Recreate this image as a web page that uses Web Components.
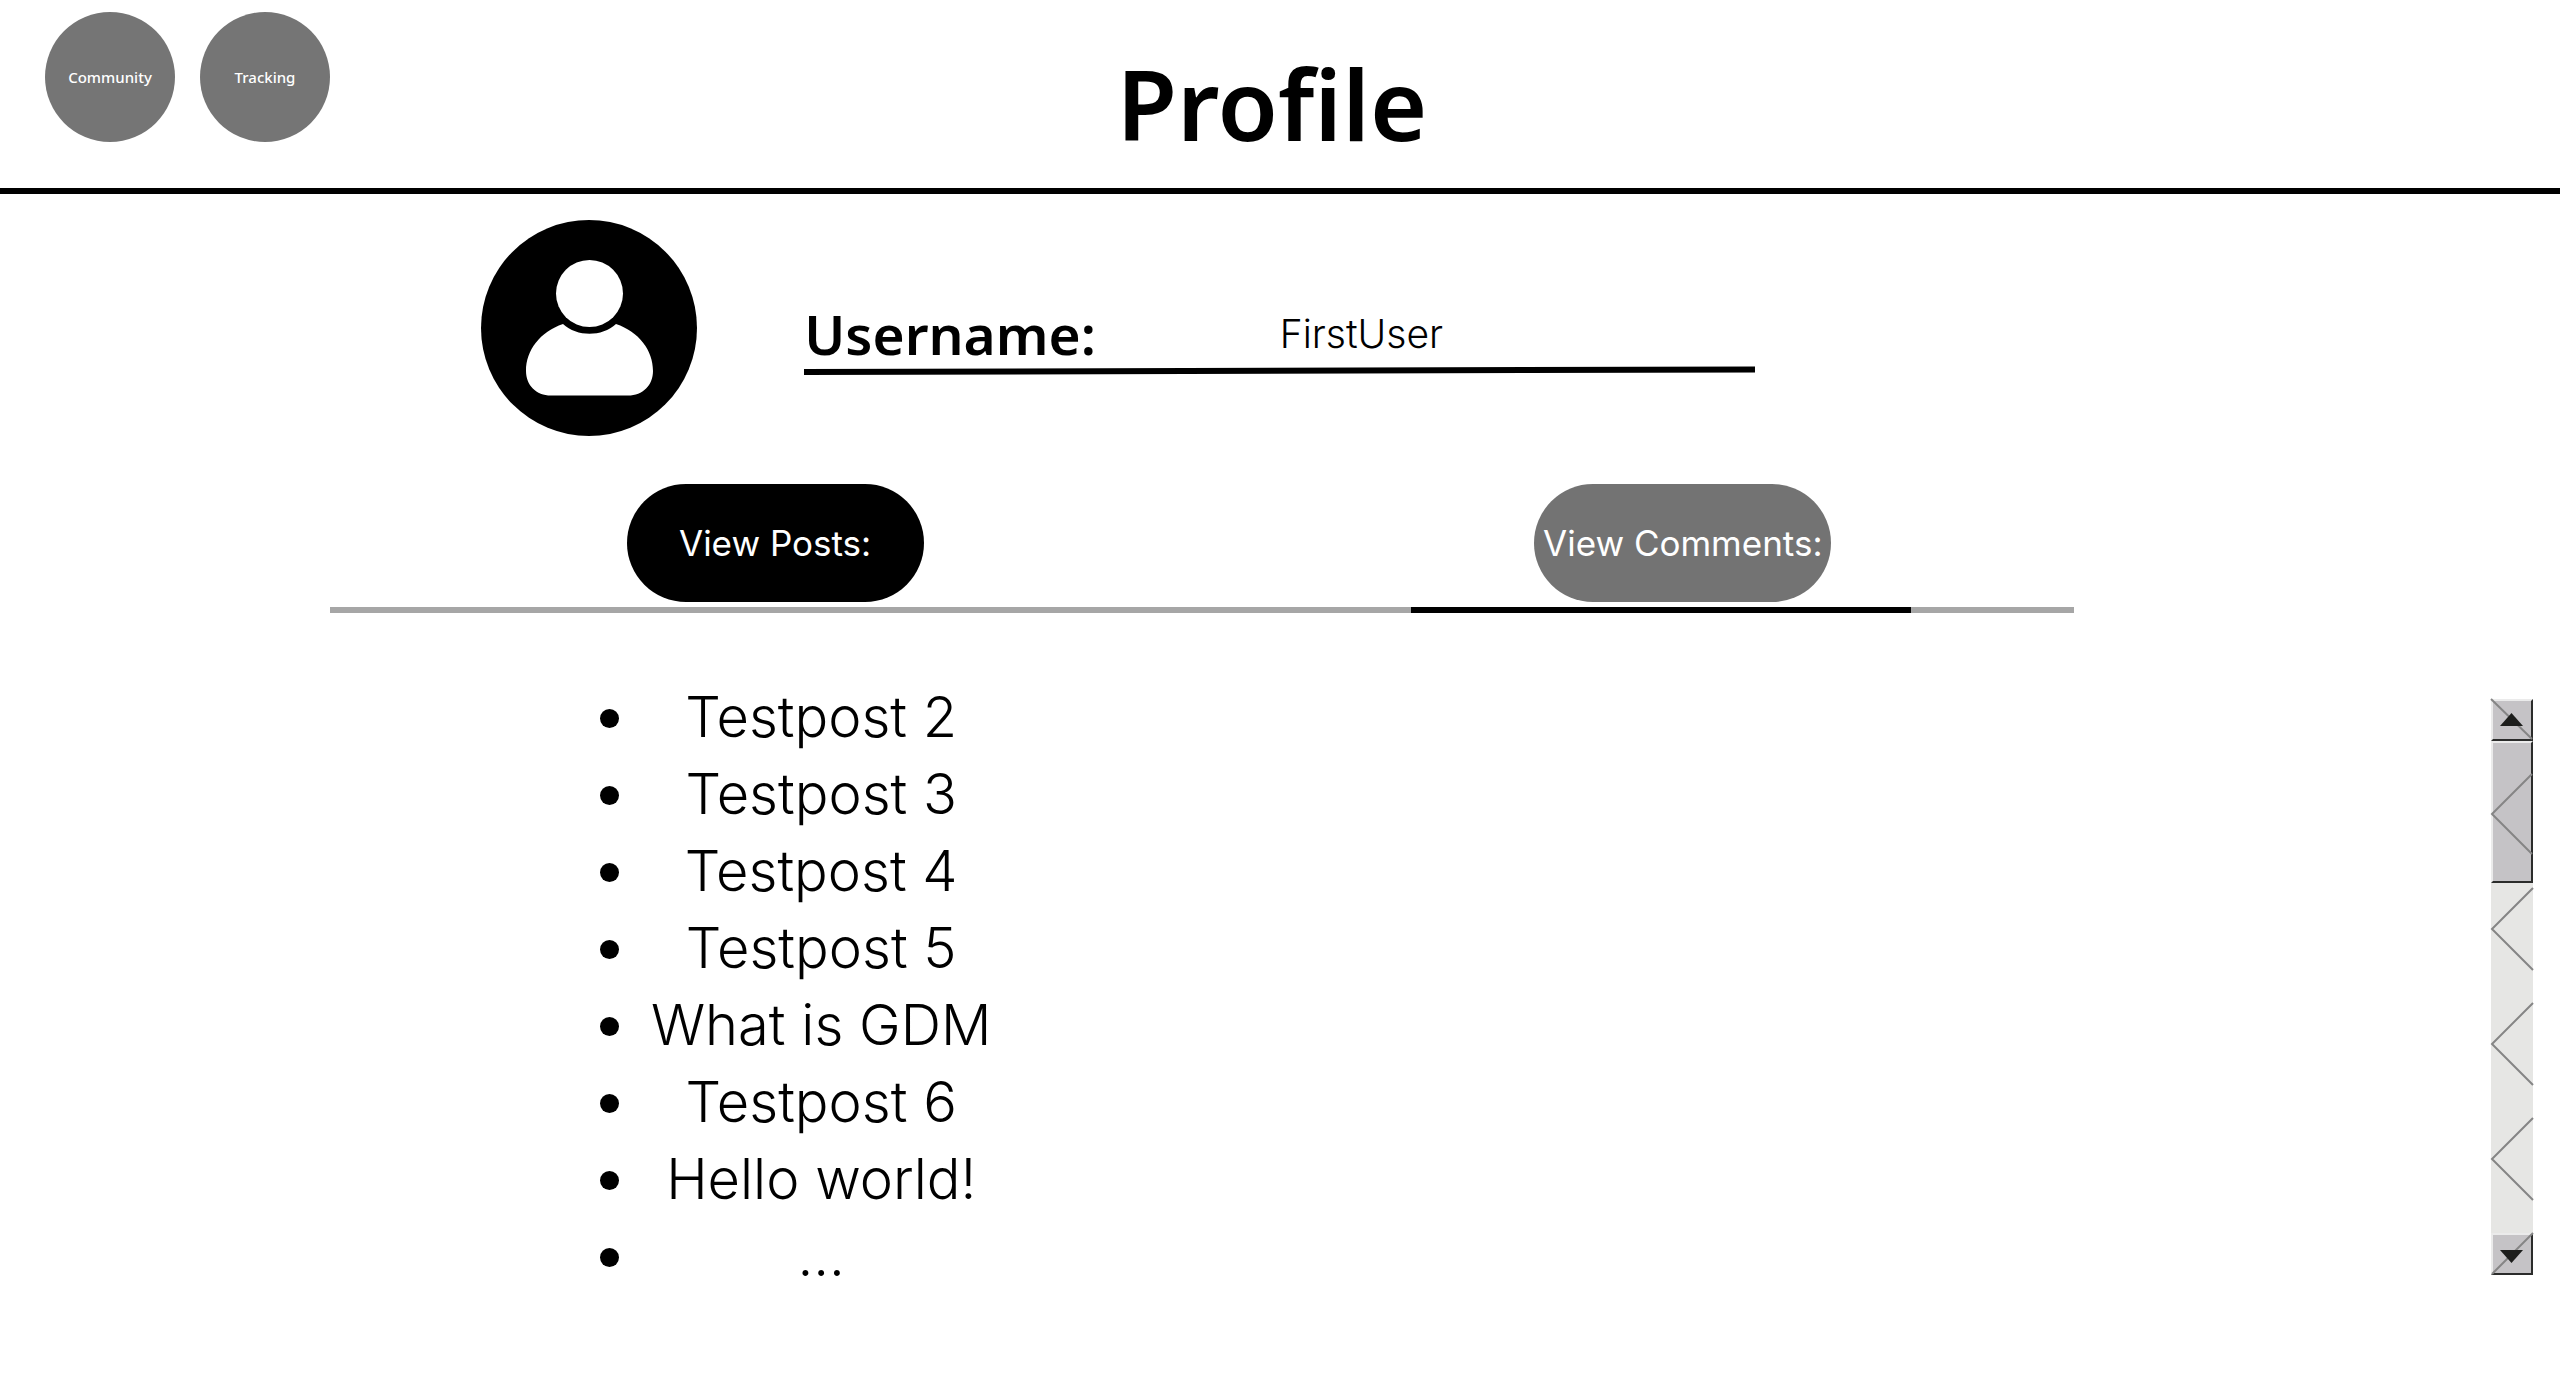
<!DOCTYPE html>
<html lang="en">
<head>
<meta charset="utf-8">
<title>Profile</title>
<style>
  body { margin: 0; background: #fff; color: #000; font-family: Inter, "Noto Sans", sans-serif; }
</style>
</head>
<body>
<profile-page></profile-page>
<script>
const define = (name, html) => customElements.define(name, class extends HTMLElement {
  constructor() {
    super();
    this.attachShadow({ mode: 'open' }).innerHTML = html;
  }
});

define('round-link', `
  <style>
    :host { display: block; }
    a { display: flex; align-items: center; justify-content: center; width: 130px; height: 130px;
        border-radius: 50%; background: #757575; color: #fff; font-family: "Noto Sans", sans-serif; font-size: 15px; font-weight: 500; text-decoration: none; }
  </style>
  <a href="#"><slot></slot></a>`);

define('page-header', `
  <style>
    :host { display: block; border-bottom: 6px solid #000; }
    header { display: grid; grid-template-columns: 1fr auto 1fr; align-items: start; height: 176px; padding: 12px 61px 0 45px; }
    nav { display: flex; gap: 25px; }
    h1 { margin: 0; padding-top: 26px; font-family: "Noto Sans", sans-serif; font-size: 98px; line-height: 130px; font-weight: 600; }
  </style>
  <header>
    <nav><round-link>Community</round-link><round-link>Tracking</round-link></nav>
    <h1><slot></slot></h1>
  </header>`);

define('user-avatar', `
  <style>:host { display: block; width: 216px; height: 216px; } svg { display: block; width: 100%; height: 100%; }</style>
  <svg viewBox="0 0 216 216" role="img" aria-label="User">
    <circle cx="108" cy="108" r="108"/>
    <circle cx="108.500" cy="73.500" r="33.500" fill="#fff"/>
    <path fill="#fff" d="M82 104C59 112 45 130 45 151C45 165 55 175.500 70 175.500H147C162 175.500 172 165 172 151C172 130 158 112 135 104C121 117 96 117 82 104Z"/>
  </svg>`);

define('user-field', `
  <style>
    :host { display: block; }
    .row { display: grid; grid-template-columns: 50% 1fr; align-items: center; height: 60px; }
    label { font-family: "Noto Sans", sans-serif; font-size: 55px; line-height: 60px; font-weight: 600; }
    output { font-size: 39px; line-height: 60px; font-weight: 350; }
    svg { display: block; width: 100%; height: 10px; margin-top: 2px; }
  </style>
  <div class="row"><label for="name">Username:</label><output id="name"><slot></slot></output></div>
  <svg viewBox="0 0 951 10" preserveAspectRatio="none" aria-hidden="true"><path d="M0 6L951 3.500" stroke="#000" stroke-width="6"/></svg>`);

define('pill-button', `
  <style>
    :host { display: block; }
    button { display: block; width: 297px; height: 118px; padding: 0; border: 0; border-radius: 59px;
             background: var(--pill, #000); color: #fff; font-family: inherit; font-size: 35px; font-weight: 400; white-space: nowrap; }
  </style>
  <button type="button"><slot></slot></button>`);

define('view-tabs', `
  <style>
    :host { display: block; }
    .buttons { display: flex; justify-content: space-between; padding: 0 13.9% 0 17%; }
    .muted { --pill: #737373; }
    .track { height: 6px; margin-top: 5px; background: #a6a6a6; }
    .mark { width: 28.7%; height: 6px; margin-left: 62%; background: #000; }
  </style>
  <div class="buttons"><pill-button>View Posts:</pill-button><pill-button class="muted">View Comments:</pill-button></div>
  <div class="track"><div class="mark"></div></div>`);

define('post-list', `
  <style>
    :host { display: block; }
    ul { display: grid; grid-template-columns: 19px auto; column-gap: 32px; margin: 0; padding: 0; list-style: none;
         font-size: 56px; line-height: 77px; font-weight: 350; text-align: center; }
    li { display: grid; grid-column: 1 / -1; grid-template-columns: subgrid; align-items: center; }
    li::before { content: ""; width: 19px; height: 19px; margin-top: 2px; border-radius: 50%; background: #000; }
  </style>
  <ul>
    <li><span>Testpost 2</span></li>
    <li><span>Testpost 3</span></li>
    <li><span>Testpost 4</span></li>
    <li><span>Testpost 5</span></li>
    <li><span>What is GDM</span></li>
    <li><span>Testpost 6</span></li>
    <li><span>Hello world!</span></li>
    <li><span>...</span></li>
  </ul>`);

define('scroll-strip', `
  <style>
    :host { display: flex; flex-direction: column; width: 42px; background: #e6e6e4; }
    button, .thumb { display: block; box-sizing: border-box; width: 42px; height: 42px; padding: 0; border: 2px solid;
                     border-color: #ebebeb #2b2c2b #2b2c2b #ebebeb; background: #c5c3c6; }
    .thumb { height: 142px; }
    svg { display: block; overflow: visible; margin: -2px; fill: none; stroke: #858585; stroke-width: 2; }
    .track svg { margin: 0; }
    .arrow { fill: #1d1e1c; stroke: none; }
  </style>
  <button type="button" aria-label="Scroll up"><svg width="42" height="42"><path d="M0 0L41 40"/><path class="arrow" d="M20.500 14L32 27H9Z"/></svg></button>
  <div class="thumb"><svg width="42" height="142"><path d="M41 33L1 73L41 113"/></svg></div>
  <div class="track"><svg width="42" height="350"><path d="M42 5L1 46L42 87M42 120L1 161L42 202M42 235L1 276L42 317"/></svg></div>
  <button type="button" aria-label="Scroll down"><svg width="42" height="42"><path d="M1 41L42 0"/><path class="arrow" d="M9 17H32L20.500 30Z"/></svg></button>`);

define('profile-page', `
  <style>
    :host { display: block; }
    .user { display: flex; align-items: flex-start; gap: 107px; padding: 26px 0 48px 18.8%; }
    user-field { width: 951px; padding-top: 84px; }
    view-tabs { width: 68.1%; margin-left: 12.9%; }
    .posts { display: flex; justify-content: space-between; align-items: flex-start; padding: 66px 27px 0 600px; }
    scroll-strip { margin-top: 20px; }
  </style>
  <page-header>Profile</page-header>
  <main>
    <section class="user"><user-avatar></user-avatar><user-field>FirstUser</user-field></section>
    <view-tabs></view-tabs>
    <section class="posts"><post-list></post-list><scroll-strip></scroll-strip></section>
  </main>`);
</script>
</body>
</html>
